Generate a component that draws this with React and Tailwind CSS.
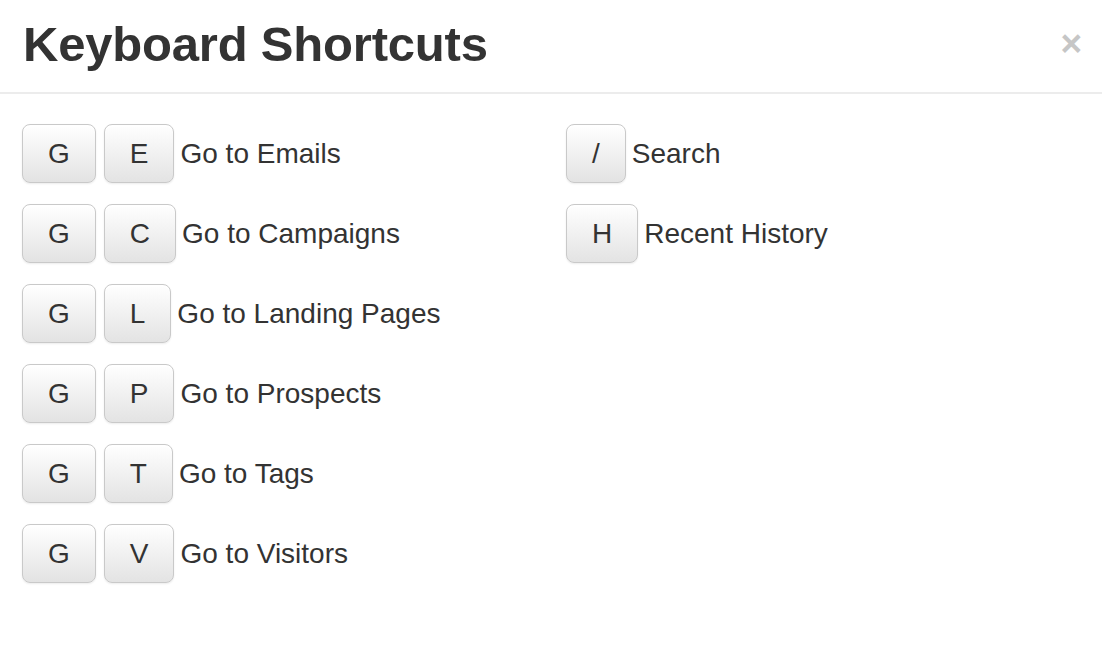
import React from 'react';

const leftShortcuts = [
  { keys: ['G', 'E'], label: 'Go to Emails' },
  { keys: ['G', 'C'], label: 'Go to Campaigns' },
  { keys: ['G', 'L'], label: 'Go to Landing Pages' },
  { keys: ['G', 'P'], label: 'Go to Prospects' },
  { keys: ['G', 'T'], label: 'Go to Tags' },
  { keys: ['G', 'V'], label: 'Go to Visitors' },
];

const rightShortcuts = [
  { keys: ['/'], label: 'Search' },
  { keys: ['H'], label: 'Recent History' },
];

const Key = ({ children }) => (
  <span className="h-[59px] px-[25px] flex items-center justify-center border border-[#c9c9c9] rounded-[8px] bg-gradient-to-b from-white to-[#e3e3e3] shadow-[inset_0_2px_0_rgba(255,255,255,0.9),0_1px_2px_rgba(0,0,0,0.08)] text-[28px] text-[#333]">
    {children}
  </span>
);

const ShortcutRow = ({ keys, label }) => (
  <div className="flex items-center gap-[8px]">
    {keys.map((k, i) => (
      <Key key={i}>{k}</Key>
    ))}
    <span className="text-[28px] text-[#333] leading-none -ml-[2px]">{label}</span>
  </div>
);

export default function App() {
  return (
    <div
      className="w-[1102px] h-[658px] bg-white overflow-hidden"
      style={{ fontFamily: '"Liberation Sans", Arial, Helvetica, sans-serif' }}
    >
      {/* header */}
      <div className="h-[94px] border-b-2 border-[#ececec] flex items-start justify-between pl-[23px] pr-[20px] pt-[20px]">
        <h1 className="text-[49px] font-bold leading-none text-[#333] tracking-[-0.2px]">Keyboard Shortcuts</h1>
        <button className="text-[37px] font-bold leading-none text-[#c6c6c6] mt-[5px]">×</button>
      </div>

      {/* body */}
      <div className="flex pt-[30px] pl-[22px]">
        <div className="w-[544px] flex flex-col gap-[21px]">
          {leftShortcuts.map((s) => (
            <ShortcutRow key={s.label} {...s} />
          ))}
        </div>
        <div className="flex flex-col gap-[21px]">
          {rightShortcuts.map((s) => (
            <ShortcutRow key={s.label} {...s} />
          ))}
        </div>
      </div>
    </div>
  );
}
